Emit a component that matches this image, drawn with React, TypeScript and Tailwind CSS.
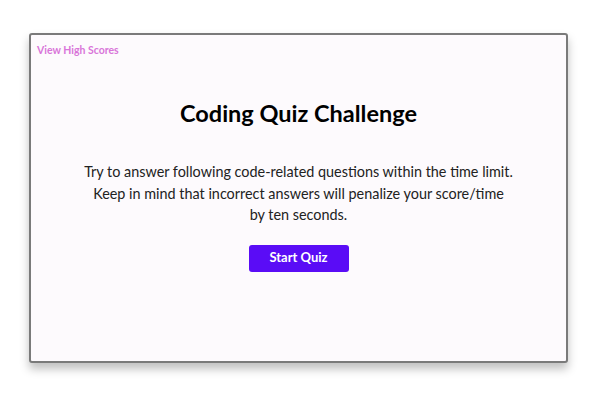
import React from 'react';

const App: React.FC = () => {
  return (
    <div className="w-[600px] h-[400px] bg-white pt-[33px] pl-[29px]" style={{ fontFamily: 'Lato, "Noto Sans", sans-serif' }}>
      {/* Quiz card */}
      <div className="w-[539px] h-[330px] bg-[#fdfafd] border-2 border-[#7a7a7a] rounded-[3px] shadow-[0_6px_10px_rgba(0,0,0,0.25)] flex flex-col">
        <div className="px-[6px] pt-[3px] leading-[20px]">
          <a href="#" className="text-[10.5px] font-bold text-[#d975d9]">
            View High Scores
          </a>
        </div>

        <main className="flex flex-col items-center">
          <h1 className="mt-[38px] text-[23.5px] leading-[30px] font-bold text-black">
            Coding Quiz Challenge
          </h1>
          <p className="mt-[33px] text-[14.4px] leading-[21.5px] text-[#222] text-center">
            Try to answer following code-related questions within the time limit.
            <br />
            Keep in mind that incorrect answers will penalize your score/time
            <br />
            by ten seconds.
          </p>
          <button className="mt-[19px] w-[100px] h-[27px] bg-[#5a0cf6] text-white text-[13px] font-bold rounded-[3px]">
            Start Quiz
          </button>
        </main>
      </div>
    </div>
  );
};

export default App;
